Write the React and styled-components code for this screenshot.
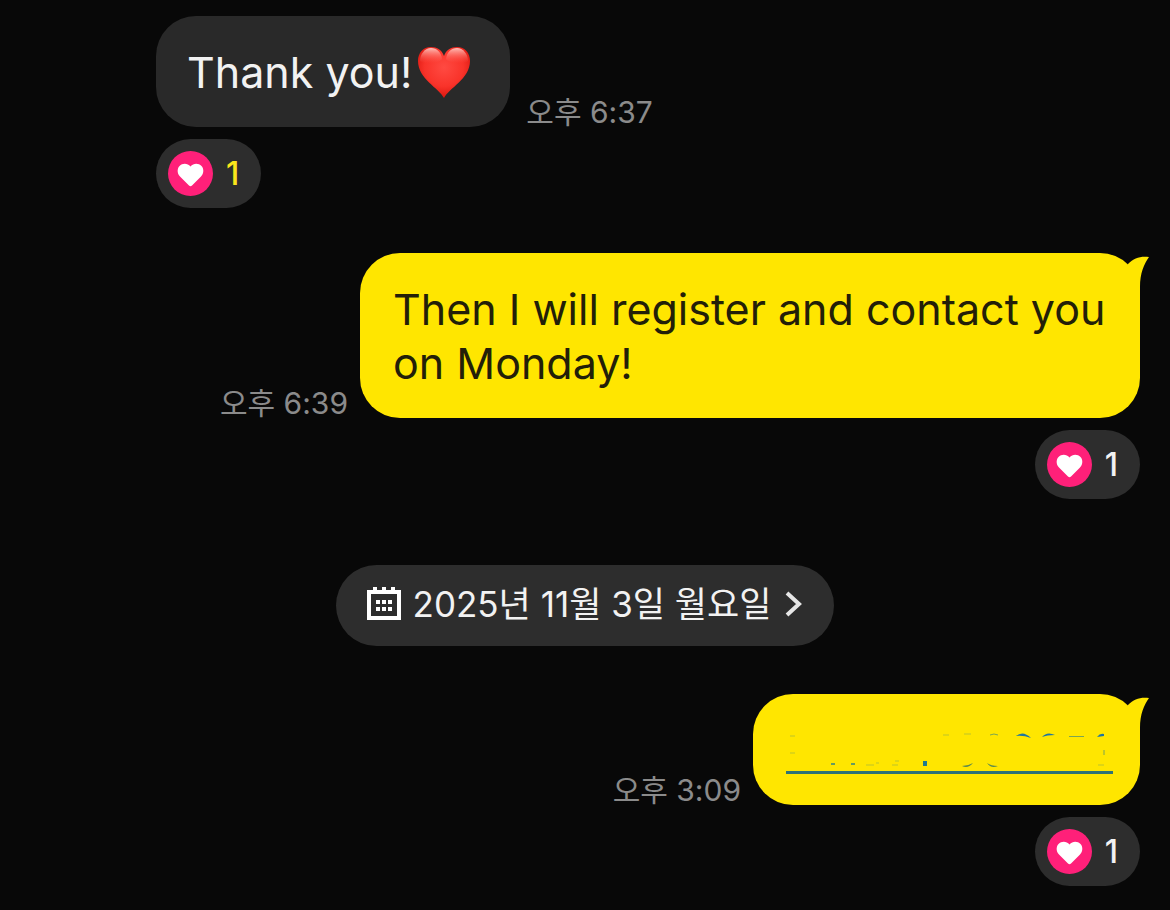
import { useState } from "react";
import styled, { createGlobalStyle } from "styled-components";

const GlobalStyle = createGlobalStyle`
    body {
        margin: 0;
        background-color: #080808;
        font-family: Inter, "Noto Sans CJK KR", sans-serif;
    }
`

const ChatContainer = styled.main`
    display: flex;
    flex-direction: column;
    box-sizing: border-box;
    min-height: 100vh;
    padding: 16px 30px 24px 156px;
`

const MessageGroup = styled.div`
    display: flex;
    flex-direction: column;
    align-items: ${props => props.$mine ? 'flex-end' : 'flex-start'};
    gap: 12px;
`

const MessageRow = styled.div`
    display: flex;
    flex-direction: ${props => props.$mine ? 'row-reverse' : 'row'};
    align-items: flex-end;
    gap: ${props => props.$mine ? '12px' : '16px'};
`

const Bubble = styled.div`
    position: relative;
    box-sizing: border-box;
    max-width: 780px;
    padding: ${props => props.$mine ? '29px 27px 28px 33px' : '29px 39px 28px 31px'};
    border-radius: 40px;
    background-color: ${props => props.$mine ? '#FFE600' : '#292929'};
    color: ${props => props.$mine ? '#231F08' : '#F2F2F2'};
`

const BubbleText = styled.p`
    margin: 0;
    font-size: 43px;
    line-height: 54px;
`

const Emoji = styled.svg`
    width: 54px;
    height: 54px;
    margin-left: 5px;
    vertical-align: top;
`

const TailShape = styled.svg`
    position: absolute;
    top: 3px;
    right: -10px;
    width: 24px;
    height: 38px;
`

const Time = styled.time`
    flex-shrink: 0;
    color: #8B8B8B;
    font-size: 30px;
    line-height: 30px;
`

const ReactionButton = styled.button`
    display: flex;
    align-items: center;
    gap: 13px;
    height: 69px;
    padding: 0 22px 0 12px;
    border: none;
    border-radius: 36px;
    background-color: #2D2D2D;
    color: ${props => props.$active ? '#FBE51B' : '#F2F2F2'};
    font-family: inherit;
    font-size: 32px;
    font-weight: 500;
    line-height: 40px;
    cursor: pointer;
`

const ReactionIcon = styled.svg`
    width: 45px;
    height: 45px;
`

const DateButton = styled.button`
    display: flex;
    align-items: center;
    align-self: center;
    height: 81px;
    margin: 66px 126px 48px 0;
    padding: 0 30px 4px;
    border: none;
    border-radius: 41px;
    background-color: #2D2D2D;
    color: #F2F2F2;
    font-family: inherit;
    font-size: 35px;
    line-height: 44px;
    cursor: pointer;
`

const CalendarIcon = styled.svg`
    width: 36px;
    height: 36px;
    margin-right: 11px;
`

const ChevronIcon = styled.svg`
    width: 20px;
    height: 28px;
    margin-left: 13px;
`

const HiddenLink = styled.a`
    display: block;
    width: 327px;
    margin-bottom: 3px;
    border-bottom: 3px solid #2F7377;
`

const HiddenMarks = styled.svg`
    display: block;
    width: 100%;
    height: 48px;
`

const Spacer = styled.div`
    height: 45px;
`

const Tail = () => (
    <TailShape viewBox="0 0 24 38" fill="#FFE600" aria-hidden="true">
        <path d="M2 8C8 2 14 0 23 1C18 8 14 17 14 31V38L0 20Z"/>
    </TailShape>
)

const RedHeart = () => (
    <Emoji viewBox="0 0 54 54" role="img" aria-label="heart">
        <defs>
            <radialGradient id="heartFill" cx="0.5" cy="0.4" r="0.62">
                <stop offset="0" stopColor="#FF4A42"/>
                <stop offset="0.6" stopColor="#F9332A"/>
                <stop offset="1" stopColor="#D8140C"/>
            </radialGradient>
            <linearGradient id="heartShine" x1="0" y1="0" x2="0" y2="1">
                <stop offset="0" stopColor="#FFC9C2" stopOpacity="0.95"/>
                <stop offset="1" stopColor="#FF5A50" stopOpacity="0"/>
            </linearGradient>
        </defs>
        <path fill="url(#heartFill)" d="M27 53C22 43 1 34 1 16C1 8 6 2 14 2C20 2 25 5 27 11C29 5 34 2 40 2C48 2 53 8 53 16C53 34 32 43 27 53Z"/>
        <path fill="url(#heartShine)" d="M3 16C3 9 8 3 14 3C20 3 24 7 25 14C22 18 8 20 3 16Z"/>
        <path fill="url(#heartShine)" d="M29 14C30 7 34 3 40 3C46 3 51 9 51 16C46 20 32 18 29 14Z"/>
    </Emoji>
)

const Reaction = ({ initialActive }) => {

    const [active, setActive] = useState(initialActive)

    return (
        <ReactionButton type="button" $active={active} onClick={() => setActive(!active)}>
            <ReactionIcon viewBox="0 0 45 45" aria-hidden="true">
                <circle cx="22.5" cy="22.5" r="22.5" fill="#FF2079"/>
                <path fill="#FFFFFF" d="M21 34.500L12 25.500C9 22.500 9 17.500 11.500 15C14.500 12 19.500 12 22.500 15.500C25.500 12 30.500 12 33.500 15C36 17.500 36 22.500 33 25.500L24 34.500Q22.500 36 21 34.500Z"/>
            </ReactionIcon>
            <span>1</span>
        </ReactionButton>
    )
}

const Message = ({ mine, time, children }) => (
    <MessageGroup $mine={mine}>
        <MessageRow $mine={mine}>
            <Bubble $mine={mine}>
                {children}
                {mine && <Tail/>}
            </Bubble>
            <Time>{time}</Time>
        </MessageRow>
        <Reaction initialActive={!mine}/>
    </MessageGroup>
)

const App = () => {
    return (
        <>
            <GlobalStyle/>
            <ChatContainer>
                <Message time="오후 6:37">
                    <BubbleText>Thank you!<RedHeart/></BubbleText>
                </Message>
                <Spacer/>
                <Message mine time="오후 6:39">
                    <BubbleText>Then I will register and contact you on Monday!</BubbleText>
                </Message>
                <DateButton type="button">
                    <CalendarIcon viewBox="0 0 36 36" aria-hidden="true">
                        <path fill="none" stroke="#FFFFFF" strokeWidth="4" d="M3 6H33V32H3Z"/>
                        <path fill="#FFFFFF" d="M7 1h4v5h-4zM16 1h4v5h-4zM25 1h4v5h-4z"/>
                        <path fill="#FFFFFF" d="M10 14h4v4h-4zM16 14h4v4h-4zM22 14h4v4h-4zM10 21h4v4h-4zM16 21h4v4h-4zM22 21h4v4h-4z"/>
                    </CalendarIcon>
                    <span>2025년 11월 3일 월요일</span>
                    <ChevronIcon viewBox="0 0 20 28" fill="none" stroke="#E6E6E6" strokeWidth="4" aria-hidden="true">
                        <path d="M3 3L15 14L3 25"/>
                    </ChevronIcon>
                </DateButton>
                <Message mine time="오후 3:09">
                    <HiddenLink href="#" aria-label="Hidden link">
                        {/* what is left of the link after it was painted over */}
                        <HiddenMarks viewBox="0 1 327 48" fill="none" stroke="#237A8C" aria-hidden="true">
                            <path strokeWidth="1" opacity="0.3" d="M4 14h5M4 31h5M80 43h8M90 41h3M106 43h6M109 39h4M157 13h6M178 12h7M312 43h6"/>
                            <path strokeWidth="1" opacity="0.6" d="M204 13Q208 11 212 13M283 14.500h15M318 28v5"/>
                            <path strokeWidth="2" opacity="0.7" d="M45 42h4M65 42h4"/>
                            <path strokeWidth="4" d="M139 39v5"/>
                            <path fill="#1F76A0" stroke="none" d="M230 14Q237 8 245 16Q237 13 230 14ZM256 15Q261 9 269 13Q261 13 256 15ZM311 15Q314 11 318 12V14Z"/>
                            <path fill="#5C8A50" stroke="none" d="M176 44Q182 44 187 41Q182 47 176 44ZM201 41Q205 44 212 44Q205 47 201 41Z"/>
                        </HiddenMarks>
                    </HiddenLink>
                </Message>
            </ChatContainer>
        </>
    )
}

export default App
